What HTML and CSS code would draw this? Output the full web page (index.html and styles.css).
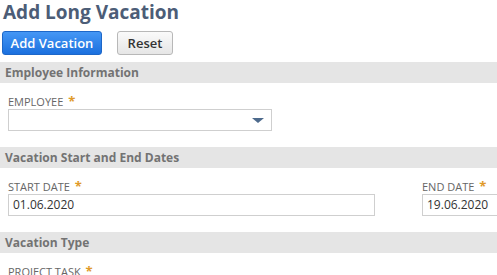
FILE: index.html
```html
<!DOCTYPE html>
<html lang="en">
<head>
    <meta charset="UTF-8">
    <title>Add Long Vacation</title>
    <link rel="stylesheet" href="styles.css">
</head>
<body>
    <header class="page-head">
        <h1>Add Long Vacation</h1>
        <div class="actions">
            <button class="btn btn-primary">Add Vacation</button>
            <button class="btn btn-plain">Reset</button>
        </div>
    </header>

    <section class="group">
        <h2 class="group-title">Employee Information</h2>
        <div class="fields">
            <div class="field field-employee">
                <label>EMPLOYEE <span class="req">*</span></label>
                <div class="input select">
                    <span class="arrow"></span>
                </div>
            </div>
        </div>
    </section>

    <section class="group">
        <h2 class="group-title">Vacation Start and End Dates</h2>
        <div class="fields">
            <div class="field field-start">
                <label>START DATE <span class="req">*</span></label>
                <div class="input">01.06.2020</div>
            </div>
            <div class="field field-end">
                <label>END DATE <span class="req">*</span></label>
                <div class="input">19.06.2020</div>
            </div>
        </div>
    </section>

    <section class="group">
        <h2 class="group-title">Vacation Type</h2>
        <div class="fields">
            <div class="field">
                <label>PROJECT TASK <span class="req">*</span></label>
            </div>
        </div>
    </section>
</body>
</html>
```

FILE: styles.css
```css
body {
    margin: 0;
    font-family: "Open Sans", Arial, sans-serif;
    color: #333;
    background: #fff;
    overflow: hidden;
}
.page-head {
    padding: 0 0 0 3px;
}
.page-head h1 {
    margin: 0;
    font-size: 19px;
    line-height: 24px;
    font-weight: 700;
    color: #4c5d77;
}
.actions {
    display: flex;
    gap: 15px;
    margin-top: 7px;
    margin-left: -1px;
}
.btn {
    font-family: "Open Sans", Arial, sans-serif;
    font-size: 13px;
    font-weight: 600;
    height: 24px;
    border-radius: 3px;
    padding: 0;
    white-space: nowrap;
    cursor: pointer;
}
.btn-primary {
    width: 100px;
    color: #fff;
    background: linear-gradient(#4597f5, #1b70de);
    border: 1px solid #1d67c8;
}
.btn-plain {
    width: 56px;
    color: #333;
    background: linear-gradient(#fafafa, #e6e6e6);
    border: 1px solid #b8b8b8;
}
.group {
    margin-top: 7px;
}
.group + .group {
    margin-top: 16px;
}
.group-title {
    margin: 0;
    height: 21px;
    line-height: 21px;
    padding-left: 5px;
    background: #e5e5e5;
    color: #737373;
    font-size: 12px;
    font-weight: 700;
}
.fields {
    display: flex;
    gap: 47px;
    padding: 12px 0 0 8px;
}
.field label {
    display: block;
    font-size: 11px;
    color: #666;
    line-height: 13px;
}
.req {
    color: #e09a29;
    font-size: 13px;
    font-weight: 700;
    margin-left: 2px;
}
.input {
    box-sizing: border-box;
    height: 22px;
    border: 1px solid #cfcfcf;
    padding: 0 4px;
    font-size: 12px;
    line-height: 20px;
    color: #333;
    margin-top: 1px;
}
.field-employee .input {
    width: 264px;
}
.field-start .input {
    width: 367px;
}
.field-end .input {
    width: 120px;
}
.select {
    position: relative;
}
.arrow {
    position: absolute;
    right: 7px;
    top: 8px;
    width: 0;
    height: 0;
    border-left: 6px solid transparent;
    border-right: 6px solid transparent;
    border-top: 5px solid #4d6a8c;
}
```
